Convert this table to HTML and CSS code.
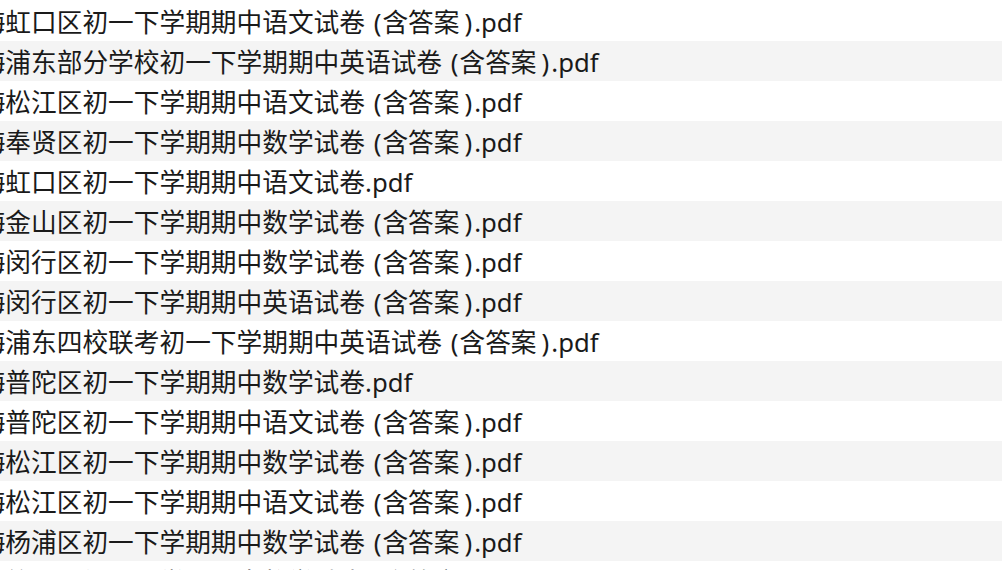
FILE: index.html
```html
<!DOCTYPE html>
<html lang="zh-CN">
<head>
<meta charset="utf-8">
<title>文件列表</title>
<link rel="stylesheet" href="styles.css">
</head>
<body>
<ul class="file-list">
  <li class="file-row"><span class="file-name">上海虹口区初一下学期期中语文试卷 <span class="po">(</span>含答案<span class="pc">)</span>.pdf</span></li>
  <li class="file-row"><span class="file-name">上海浦东部分学校初一下学期期中英语试卷 <span class="po">(</span>含答案<span class="pc">)</span>.pdf</span></li>
  <li class="file-row"><span class="file-name">上海松江区初一下学期期中语文试卷 <span class="po">(</span>含答案<span class="pc">)</span>.pdf</span></li>
  <li class="file-row"><span class="file-name">上海奉贤区初一下学期期中数学试卷 <span class="po">(</span>含答案<span class="pc">)</span>.pdf</span></li>
  <li class="file-row"><span class="file-name">上海虹口区初一下学期期中语文试卷.pdf</span></li>
  <li class="file-row"><span class="file-name">上海金山区初一下学期期中数学试卷 <span class="po">(</span>含答案<span class="pc">)</span>.pdf</span></li>
  <li class="file-row"><span class="file-name">上海闵行区初一下学期期中数学试卷 <span class="po">(</span>含答案<span class="pc">)</span>.pdf</span></li>
  <li class="file-row"><span class="file-name">上海闵行区初一下学期期中英语试卷 <span class="po">(</span>含答案<span class="pc">)</span>.pdf</span></li>
  <li class="file-row"><span class="file-name">上海浦东四校联考初一下学期期中英语试卷 <span class="po">(</span>含答案<span class="pc">)</span>.pdf</span></li>
  <li class="file-row"><span class="file-name">上海普陀区初一下学期期中数学试卷.pdf</span></li>
  <li class="file-row"><span class="file-name">上海普陀区初一下学期期中语文试卷 <span class="po">(</span>含答案<span class="pc">)</span>.pdf</span></li>
  <li class="file-row"><span class="file-name">上海松江区初一下学期期中数学试卷 <span class="po">(</span>含答案<span class="pc">)</span>.pdf</span></li>
  <li class="file-row"><span class="file-name">上海松江区初一下学期期中语文试卷 <span class="po">(</span>含答案<span class="pc">)</span>.pdf</span></li>
  <li class="file-row"><span class="file-name">上海杨浦区初一下学期期中数学试卷 <span class="po">(</span>含答案<span class="pc">)</span>.pdf</span></li>
  <li class="file-row"><span class="file-name">上海徐汇区初一下学期期中数学试卷 <span class="po">(</span>含答案<span class="pc">)</span>.pdf</span></li>
</ul>
</body>
</html>
```

FILE: styles.css
```css
html, body {
  margin: 0;
  padding: 0;
  background: #ffffff;
  overflow: hidden;
}

.file-list {
  list-style: none;
  margin: 0;
  padding: 1px 0 0 0;
  font-family: "Noto Sans", "Noto Sans CJK SC", sans-serif;
  font-size: 25.7px;
  color: #1a1a1a;
}

.file-row {
  box-sizing: border-box;
  height: 40px;
  padding-top: 4px;
  display: flex;
  align-items: center;
  white-space: nowrap;
}

.file-row:nth-child(even) {
  background: #f4f4f4;
}

.file-name {
  margin-left: -46px;
  line-height: 36px;
}

.po {
  padding-left: 2px;
  padding-right: 1px;
}

.pc {
  padding-left: 5px;
  padding-right: 2px;
}
```
